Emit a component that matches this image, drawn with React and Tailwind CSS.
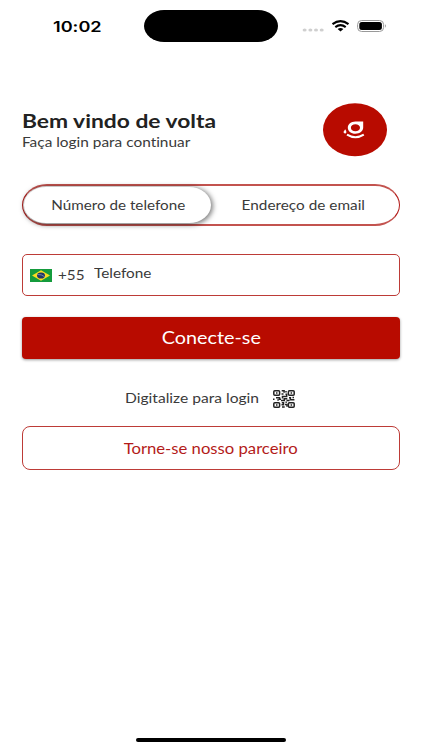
import { useState } from 'react';

function StatusBar() {
    return (
        <div className="flex h-[42px] pt-[10px]">
            <div className="w-[144px] pl-[53px] pt-[4px]">
                <span className="inline-block origin-left scale-x-[1.25] whitespace-nowrap font-['Inter',sans-serif] text-[14.5px] font-semibold leading-[22px] text-black">10:02</span>
            </div>
            <div className="h-8 w-[134px] rounded-[20px/16px] bg-black" />
            <svg className="ml-[24px] mt-[8px]" width="86" height="16" viewBox="302 18 86 16">
                <g fill="#cfcfcf">
                    <ellipse cx="304.6" cy="30" rx="2" ry="1.6" />
                    <ellipse cx="310.4" cy="30" rx="2" ry="1.6" />
                    <ellipse cx="316" cy="30" rx="2" ry="1.6" />
                    <ellipse cx="321.7" cy="30" rx="2" ry="1.6" />
                </g>
                <g fill="none" stroke="#000" strokeWidth="2.1">
                    <path d="M332.5 24.2Q340.5 18 348.5 24.2" />
                    <path d="M335.3 27.2Q340.5 23.2 345.7 27.2" />
                </g>
                <path d="M337.6 29Q340.5 27 343.4 29L340.5 31.4Z" fill="#000" />
                <rect x="357.6" y="20.5" width="26" height="11" rx="4" fill="none" stroke="#999" />
                <rect x="359.3" y="22" width="22.6" height="8" rx="2.5" fill="#000" />
                <path d="M385 24.3q1.8 1.5 0 3.4z" fill="#999" />
            </svg>
        </div>
    );
}

function Logo() {
    return (
        <svg width="64" height="54" viewBox="323 103 64 54">
            <ellipse cx="355" cy="129.8" rx="32" ry="26.5" fill="#b80b00" />
            <path fill="#fff" fillRule="evenodd" d="M355.4 121.6H363.2V127.6C363.2 131 359.8 133.8 355.4 133.8C351 133.8 347.8 131 347.8 127.7C347.8 124.4 351 121.6 355.4 121.6ZM355.4 124.2C352.8 124.2 350.9 125.7 350.9 127.7C350.9 129.7 352.8 131.2 355.4 131.2C358 131.2 360 129.7 360 127.7C360 125.7 358 124.2 355.4 124.2Z" />
            <path d="M347 134.6Q355.4 139.8 363.8 134.6" fill="none" stroke="#fff" strokeWidth="2" />
            <path d="M345.2 129.3Q347.4 132.6 345.6 133.4Q343.2 133.6 343.6 131.8Z" fill="#fff" />
        </svg>
    );
}

function BrazilFlag() {
    return (
        <svg width="22" height="13" viewBox="0 0 22 13">
            <rect width="22" height="13" fill="#149b3c" />
            <path d="M2 6.5L11 1.2L20 6.5L11 11.8Z" fill="#f8dc21" />
            <ellipse cx="11" cy="6.5" rx="4" ry="3.1" fill="#203568" />
            <path d="M7.4 5.5Q11.5 5.1 14.5 7.7" fill="none" stroke="#a9bac7" strokeWidth=".6" />
        </svg>
    );
}

function QrIcon() {
    return (
        <svg width="22" height="18" viewBox="0 0 22 18" fill="none" stroke="#222" strokeWidth="1.5">
            <rect x=".8" y=".8" width="5.8" height="4.5" rx="1" />
            <rect x="15.4" y=".8" width="5.8" height="4.5" rx="1" />
            <rect x=".8" y="12.7" width="5.8" height="4.5" rx="1" />
            <rect x="15.4" y="12.7" width="5.8" height="4.5" rx="1" />
            <path d="M3 3h1.5M17.6 3h1.5M3 15h1.5M17.6 15h1.5M8.7.8h2.4v2M13 1v1.5M8.5 4h2M12.5 4.3h1.2v2.2H9.5v2M0 9.2h1.5M3 7.8h3.5v1.5H8M4.3 10h1.5M8 10.6h3.3V8.7h3M16 7.7h1.4v2h4M19.5 7.5h1.5M13.5 10.5h3M8.8 12.7h1.7v2H8.5M12.5 12.3h1.3M12 14.5h2v2.2M9 17.1h2.7" />
        </svg>
    );
}

export default function App() {
    const [mode, setMode] = useState('phone');

    return (
        <div className="flex h-[750px] w-[422px] flex-col overflow-hidden bg-white font-['Lato',sans-serif] text-[#3a3a3a] [font-variant-ligatures:none]">
            <StatusBar />

            <main className="flex flex-col px-[22px] pt-[61px]">
                <header className="flex h-[54px] justify-between pr-[13px]">
                    <div className="pt-[6px]">
                        <h1 className="w-max origin-left scale-x-[1.2] text-[19px] font-bold leading-6 text-[#222]">Bem vindo de volta</h1>
                        <p className="w-max origin-left scale-x-[1.185] text-[13px] leading-[19px]">Faça login para continuar</p>
                    </div>
                    <Logo />
                </header>

                <div className="mt-[27px] flex h-[42px] rounded-[25px/21px] border-[1.5px] border-y-2 border-x-[#b31b19] border-y-[#c3534f] p-px">
                    <button
                        className={`flex w-[187px] items-center justify-center rounded-[22px/18px] ${mode === 'phone' ? 'bg-white shadow-[1px_1px_5px_1px_rgba(0,0,0,0.5)]' : ''}`}
                        onClick={() => setMode('phone')}
                    >
                        <span className="ml-[2px] mt-[2px] scale-x-[1.17] whitespace-nowrap text-[13px]">Número de telefone</span>
                    </button>
                    <button
                        className={`flex flex-1 items-center justify-center rounded-[22px/18px] ${mode === 'email' ? 'bg-white shadow-[1px_1px_5px_1px_rgba(0,0,0,0.5)]' : ''}`}
                        onClick={() => setMode('email')}
                    >
                        <span className="mr-[3px] mt-[2px] scale-x-[1.18] whitespace-nowrap text-[13px]">Endereço de email</span>
                    </button>
                </div>

                <div className="mt-[28px] flex h-[42px] items-center rounded-[5px] border border-[#bd3b37] pl-[7px]">
                    <BrazilFlag />
                    <span className="ml-[6px] w-[36px] origin-left scale-x-[1.13] text-[13.5px]">+55</span>
                    <span className="mb-[2px] origin-left scale-x-[1.18] text-[13px]">Telefone</span>
                </div>

                <button className="mt-[21px] h-[42px] rounded-[4px] bg-[#b80b00] text-white shadow-[0_1px_3px_rgba(0,0,0,0.4)]">
                    <span className="inline-block scale-x-[1.2] text-[16.5px]">Conecte-se</span>
                </button>

                <div className="mt-[30px] flex h-[20px] items-center pl-[103px]">
                    <span className="w-[148px] origin-left scale-x-[1.2] whitespace-nowrap text-[13px]">Digitalize para login</span>
                    <QrIcon />
                </div>

                <button className="mt-[17px] h-[44px] rounded-[8px] border border-[#bd3b37] text-[#b31b19]">
                    <span className="inline-block scale-x-[1.15] text-[14.5px]">Torne-se nosso parceiro</span>
                </button>
            </main>

            <div className="mx-auto mb-[8px] mt-auto h-[4px] w-[150px] rounded-full bg-black" />
        </div>
    );
}
